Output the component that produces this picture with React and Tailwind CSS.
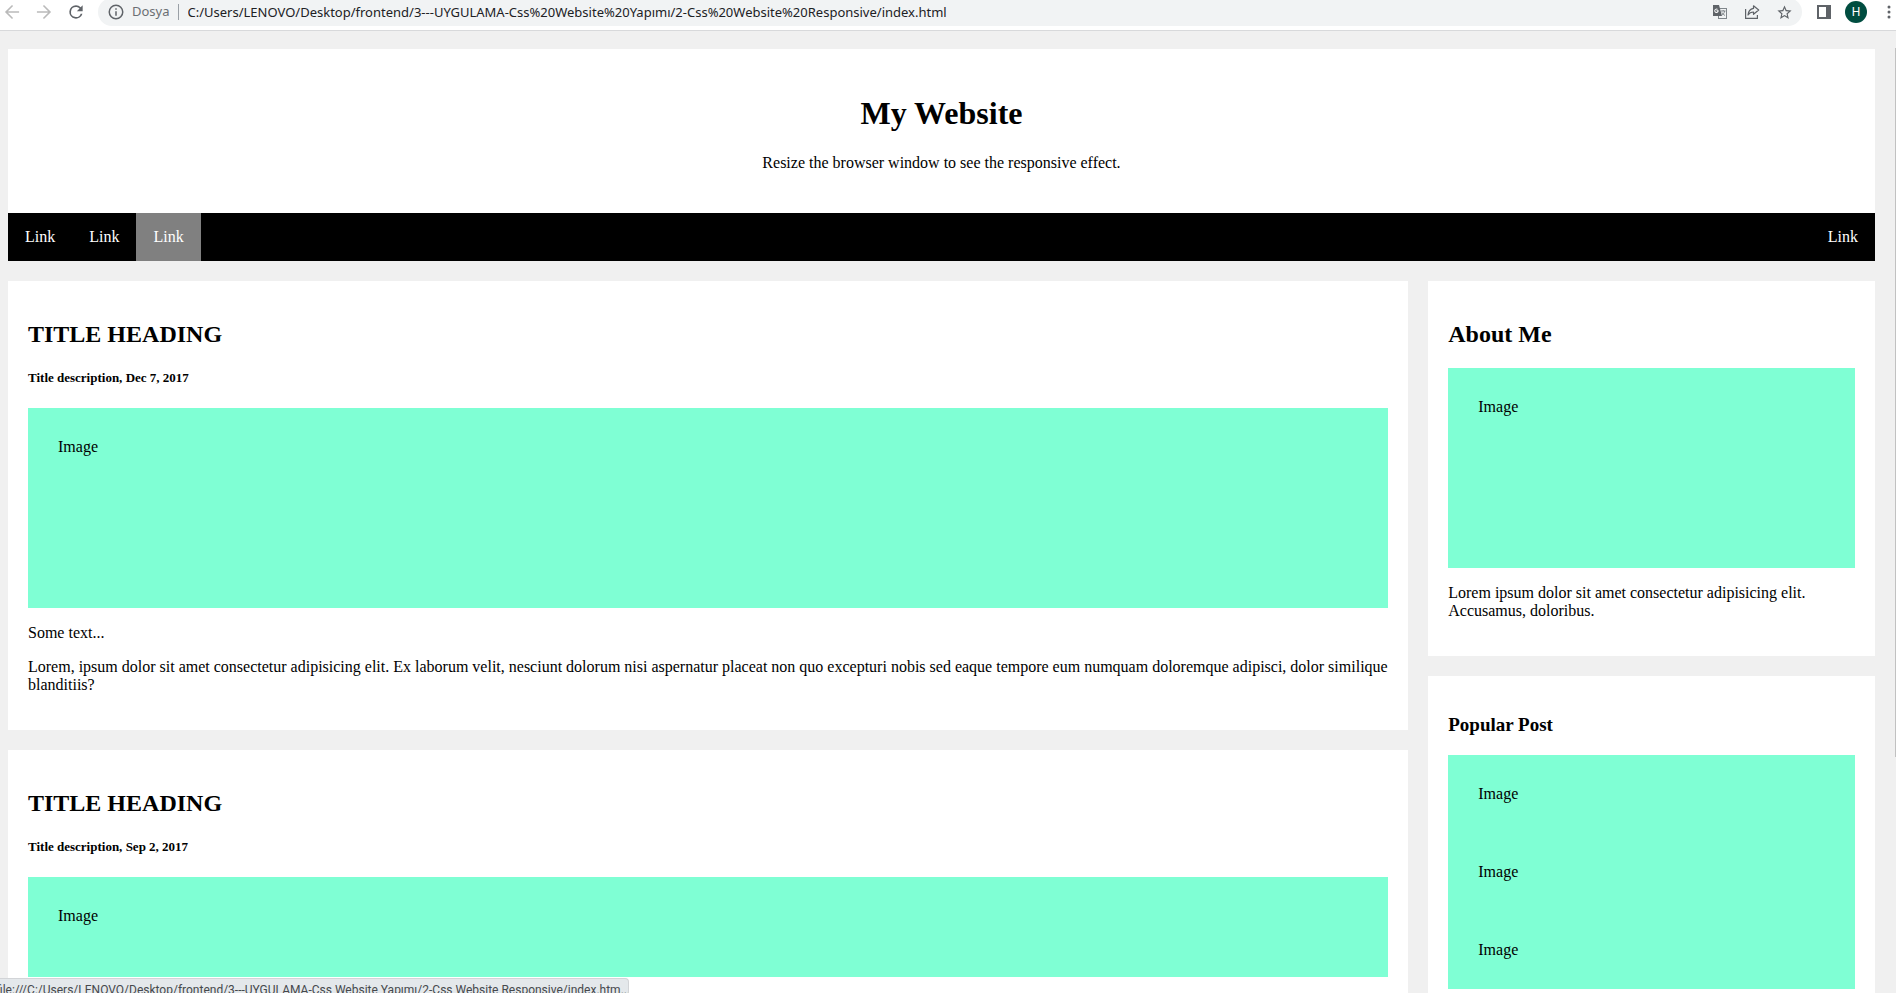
const linkClass = "px-[17px] py-[15px] text-white hover:bg-[#808080]";

function ToolButton({ label, className = "", children }) {
  return (
    <button type="button" aria-label={label} className={`flex h-7 shrink-0 items-center justify-center ${className}`}>
      {children}
    </button>
  );
}

function Icon({ d, className = "size-5 fill-[#5f6368]" }) {
  return (
    <svg viewBox="0 0 24 24" className={className} aria-hidden="true">
      <path d={d} />
    </svg>
  );
}

function Toolbar() {
  return (
    <header className="flex h-[31px] shrink-0 items-end overflow-hidden border-b border-[#d8d9db] bg-white pb-1 font-['Noto_Sans',sans-serif] text-[13px]">
      <ToolButton label="Back" className="ml-0.5 w-5">
        <Icon className="size-5 fill-[#bababa]" d="M20.5 11H7.1l6.2-6.2L12 3.500l-8.500 8.500L12 20.500l1.300-1.300L7.100 13h13.400z" />
      </ToolButton>
      <ToolButton label="Forward" className="ml-3 w-5">
        <Icon className="size-5 fill-[#bababa]" d="M3.500 11h13.400l-6.200-6.200L12 3.500l8.500 8.500L12 20.500l-1.300-1.300 6.200-6.200H3.500z" />
      </ToolButton>
      <ToolButton label="Reload" className="ml-3 w-5">
        <Icon d="M17.65 6.35A7.96 7.96 0 0 0 12 4a8 8 0 1 0 7.73 10h-2.080A6 6 0 1 1 12 6c1.660 0 3.140.69 4.220 1.780L13 11h7V4z" />
      </ToolButton>
      <div className="ml-3 flex h-7 min-w-0 flex-1 items-center rounded-full bg-[#f1f3f4] pr-0.5">
        <button type="button" className="ml-[9px] flex h-7 items-center gap-[7px] pr-2 text-[#6b6f73]">
          <Icon d="M11 7h2v2h-2zm0 4h2v6h-2zm1-9a10 10 0 1 0 0 20 10 10 0 0 0 0-20m0 18a8 8 0 1 1 0-16 8 8 0 0 1 0 16" className="size-[18px] fill-[#5f6368]" />
          Dosya
        </button>
        <span className="h-4 w-px bg-[#9aa0a6]" />
        <input
          aria-label="Address"
          readOnly
          value="C:/Users/LENOVO/Desktop/frontend/3---UYGULAMA-Css%20Website%20Yapımı/2-Css%20Website%20Responsive/index.html"
          className="h-7 min-w-0 flex-1 bg-transparent px-[9px] text-[#202124] outline-none"
        />
        <ToolButton label="Translate" className="w-8">
          <svg viewBox="0 0 16 16" className="size-4" aria-hidden="true">
            <rect x="6.500" y="4.500" width="8" height="10" fill="none" stroke="#80868b" />
            <path d="M1 1h6l3 11H1z" fill="#5f6368" />
            <path d="M6.600 6.200H4.500v1h1a1.200 1.200 0 1 1-.3-1.400l.7-.7a2.200 2.200 0 1 0 .7 1.100" fill="#fff" />
            <path d="M9 7h4.500M11.200 6v1M12.700 7c-.4 2-1.500 3.300-3 4.300M10 8.500c.6 1.200 1.600 2.200 3 3" fill="none" stroke="#80868b" />
          </svg>
        </ToolButton>
        <ToolButton label="Share" className="w-8">
          <svg viewBox="0 0 16 16" className="size-4" fill="none" stroke="#5f6368" strokeWidth="1.200" aria-hidden="true">
            <path d="M1.600 5v9.400h11.800V11" />
            <path d="M9.500 1.800 14.700 6l-5.200 4.300V8C7 8 5.300 8.900 4 11c.3-3.500 2.200-6 5.500-6.600z" strokeLinejoin="round" />
          </svg>
        </ToolButton>
        <ToolButton label="Bookmark" className="w-8">
          <Icon className="size-[17px] fill-[#5f6368]" d="m22 9.240-7.190-.62L12 2 9.190 8.630 2 9.240l5.460 4.730L5.820 21 12 17.270 18.180 21l-1.630-7.030zM12 15.400l-3.760 2.270 1-4.280-3.320-2.880 4.380-.38L12 6.100l1.710 4.040 4.380.38-3.320 2.880 1 4.280z" />
        </ToolButton>
      </div>
      <ToolButton label="Side panel" className="ml-2.5 w-6">
        <svg viewBox="0 0 14 14" className="size-[14px]" aria-hidden="true">
          <path fillRule="evenodd" fill="#5f6368" d="M0 0h14v14H0zM2 2v10h7V2z" />
        </svg>
      </ToolButton>
      <button type="button" aria-label="Profile" className="mb-[3px] ml-[9px] flex size-[22px] shrink-0 items-center justify-center rounded-full bg-[#004d40] font-['Roboto',sans-serif] text-xs text-white">
        H
      </button>
      <ToolButton label="Menu" className="mr-px ml-4 w-3">
        <svg viewBox="0 0 4 16" className="h-4 w-1 fill-[#5f6368]" aria-hidden="true">
          <circle cx="2" cy="3" r="1.500" />
          <circle cx="2" cy="8" r="1.500" />
          <circle cx="2" cy="13" r="1.500" />
        </svg>
      </ToolButton>
    </header>
  );
}

function ImageBox({ className = "" }) {
  return <div className={`bg-[#7fffd4] p-[30px] ${className}`}>Image</div>;
}

function Post({ date, imageClass, children }) {
  return (
    <article className="bg-white px-5 pt-10 pb-9">
      <h2 className="text-2xl leading-[27px] font-bold">TITLE HEADING</h2>
      <h5 className="my-[22px] text-[13px] leading-4 font-bold">Title description, {date}</h5>
      <ImageBox className={imageClass} />
      <p className="mt-4">Some text...</p>
      <p className="mt-4">{children}</p>
    </article>
  );
}

export default function App() {
  return (
    <div className="relative flex h-screen flex-col overflow-hidden bg-[#f0f0f0]">
      <Toolbar />
      <div className="flex min-h-0 flex-1 font-['Liberation_Serif',serif] text-base leading-[18px] text-black">
        <main className="min-w-0 flex-1 overflow-hidden pt-[18px] pr-5 pl-2">
          <section className="bg-white pt-[46px] pb-[41px] text-center">
            <h1 className="text-[32px] leading-[37px] font-bold">My Website</h1>
            <p className="mt-[22px]">Resize the browser window to see the responsive effect.</p>
          </section>
          <nav className="flex bg-black">
            <a href="#one" className={linkClass}>Link</a>
            <a href="#two" className={linkClass}>Link</a>
            <a href="#three" className={`${linkClass} bg-[#808080]`}>Link</a>
            <a href="#four" className={`${linkClass} ml-auto`}>Link</a>
          </nav>
          <div className="flex pt-5">
            <div className="flex w-3/4 flex-col gap-5">
              <Post date="Dec 7, 2017" imageClass="h-[200px]">
                Lorem, ipsum dolor sit amet consectetur adipisicing elit. Ex laborum velit, nesciunt dolorum nisi aspernatur placeat non quo excepturi nobis sed eaque tempore eum numquam doloremque adipisci, dolor similique blanditiis?
              </Post>
              <Post date="Sep 2, 2017" imageClass="h-[100px]">
                Lorem, ipsum dolor sit amet consectetur adipisicing elit.
              </Post>
            </div>
            <aside className="flex w-1/4 flex-col gap-5 pl-5">
              <section className="bg-white px-5 pt-10 pb-9">
                <h2 className="mb-5 text-2xl leading-[27px] font-bold">About Me</h2>
                <ImageBox className="h-[200px]" />
                <p className="mt-4">Lorem ipsum dolor sit amet consectetur adipisicing elit. Accusamus, doloribus.</p>
              </section>
              <section className="bg-white px-5 pt-[38px] pb-9">
                <h3 className="mb-5 text-[19px] leading-[21px] font-bold">Popular Post</h3>
                <ImageBox />
                <ImageBox />
                <ImageBox />
              </section>
            </aside>
          </div>
        </main>
        <div className="w-px shrink-0 pt-[17px]" aria-hidden="true">
          <div className="h-3/4 bg-[#c1c1c1]" />
        </div>
      </div>
      <div className="absolute bottom-0 left-0 h-[15px] w-[629px] overflow-hidden rounded-tr border-t border-r border-[#d2d4d7] bg-[#e4e8eb] pt-0.5 font-['Roboto',sans-serif] text-xs leading-[18px] whitespace-nowrap text-[#46494d]">
        <p className="-ml-1">file:///C:/Users/LENOVO/Desktop/frontend/3---UYGULAMA-Css Website Yapımı/2-Css Website Responsive/index.htm...</p>
      </div>
    </div>
  );
}
